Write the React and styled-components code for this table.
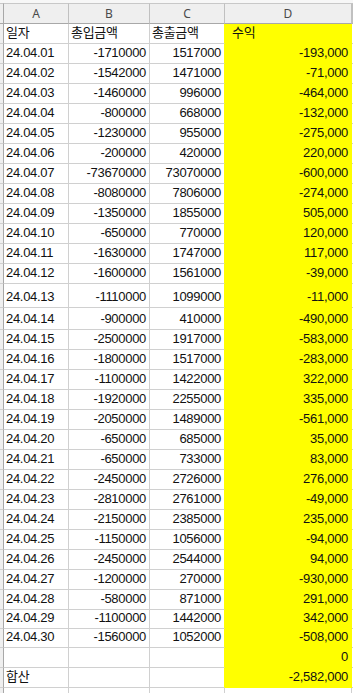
import React from 'react'
import styled, { createGlobalStyle } from 'styled-components'

const GlobalStyle = createGlobalStyle`
    body {
        margin: 0;
        background: #ffffff;
        overflow: hidden;
    }
`

const rows = [
    ['24.04.01', '-1710000', '1517000', '-193,000'],
    ['24.04.02', '-1542000', '1471000', '-71,000'],
    ['24.04.03', '-1460000', '996000', '-464,000'],
    ['24.04.04', '-800000', '668000', '-132,000'],
    ['24.04.05', '-1230000', '955000', '-275,000'],
    ['24.04.06', '-200000', '420000', '220,000'],
    ['24.04.07', '-73670000', '73070000', '-600,000'],
    ['24.04.08', '-8080000', '7806000', '-274,000'],
    ['24.04.09', '-1350000', '1855000', '505,000'],
    ['24.04.10', '-650000', '770000', '120,000'],
    ['24.04.11', '-1630000', '1747000', '117,000'],
    ['24.04.12', '-1600000', '1561000', '-39,000'],
    ['24.04.13', '-1110000', '1099000', '-11,000', 24],
    ['24.04.14', '-900000', '410000', '-490,000', 22],
    ['24.04.15', '-2500000', '1917000', '-583,000'],
    ['24.04.16', '-1800000', '1517000', '-283,000'],
    ['24.04.17', '-1100000', '1422000', '322,000'],
    ['24.04.18', '-1920000', '2255000', '335,000'],
    ['24.04.19', '-2050000', '1489000', '-561,000'],
    ['24.04.20', '-650000', '685000', '35,000'],
    ['24.04.21', '-650000', '733000', '83,000'],
    ['24.04.22', '-2450000', '2726000', '276,000'],
    ['24.04.23', '-2810000', '2761000', '-49,000'],
    ['24.04.24', '-2150000', '2385000', '235,000'],
    ['24.04.25', '-1150000', '1056000', '-94,000'],
    ['24.04.26', '-2450000', '2544000', '94,000'],
    ['24.04.27', '-1200000', '270000', '-930,000'],
    ['24.04.28', '-580000', '871000', '291,000'],
    ['24.04.29', '-1100000', '1442000', '342,000', 19],
    ['24.04.30', '-1560000', '1052000', '-508,000', 19],
    ['', '', '', '0'],
    ['합산', '', '', '-2,582,000'],
]

const columns = '4px 65px 81px 75px 127px 1fr'

export default function App() {
    return (
        <Sheet>
            <GlobalStyle />
            <HeaderRow>
                <Corner />
                <ColHead>A</ColHead>
                <ColHead>B</ColHead>
                <ColHead>C</ColHead>
                <ColHead>D</ColHead>
                <ColHead />
            </HeaderRow>
            <Row $h={20}>
                <Gutter />
                <Cell>일자</Cell>
                <Cell>총입금액</Cell>
                <Cell $edge>총출금액</Cell>
                <Cell $fill $indent>수익</Cell>
                <Cell />
            </Row>
            {rows.map(([a, b, c, d, h], i) => (
                <Row key={i} $h={h || 20}>
                    <Gutter />
                    <Cell>{a}</Cell>
                    <Cell $right>{b}</Cell>
                    <Cell $right $edge>{c}</Cell>
                    <Cell $right $fill>{d}</Cell>
                    <Cell />
                </Row>
            ))}
            <Row $h={20}>
                <Gutter />
                <Cell />
                <Cell />
                <Cell />
                <Cell />
                <Cell />
            </Row>
        </Sheet>
    )
}

const Sheet = styled.div`
    width: 353px;
    height: 693px;
    overflow: hidden;
    font-family: "Liberation Sans", "Noto Sans CJK KR", sans-serif;
    font-size: 13px;
    letter-spacing: -0.3px;
    color: #111111;
`

const HeaderRow = styled.div`
    display: grid;
    grid-template-columns: ${columns};
    height: 24px;
    background: #f7f7f7;
`

const Corner = styled.div`
    margin-top: 3px;
    background: #efefef;
    border-top: 1px solid #c8c8c8;
    border-right: 1px solid #a8a8a8;
    border-bottom: 1px solid #a8a8a8;
`

const ColHead = styled.div`
    margin-top: 3px;
    display: flex;
    align-items: center;
    justify-content: center;
    background: #efefef;
    border-top: 1px solid #c8c8c8;
    border-right: 1px solid #c0c0c0;
    border-bottom: 1px solid #a8a8a8;
    font-family: "Noto Sans", sans-serif;
    font-size: 12px;
    letter-spacing: 0;
    color: #4a4a4a;
`

const Row = styled.div`
    display: grid;
    grid-template-columns: ${columns};
    height: ${p => p.$h}px;
`

const Gutter = styled.div`
    background: #efefef;
    border-right: 1px solid #a8a8a8;
    border-bottom: 1px solid #d0d0d0;
`

const Cell = styled.div`
    display: flex;
    align-items: flex-end;
    justify-content: ${p => (p.$right ? 'flex-end' : 'flex-start')};
    padding: 0 ${p => (p.$right ? 3 : 2)}px 3px ${p => (p.$indent ? 7 : 2)}px;
    background: ${p => (p.$fill ? '#ffff00' : 'transparent')};
    border-right: 1px solid ${p => (p.$fill || p.$edge ? '#ffff00' : '#d0d0d0')};
    border-bottom: 1px solid ${p => (p.$fill ? '#ffff00' : '#d0d0d0')};
    white-space: nowrap;
    line-height: 15px;
    overflow: hidden;
`
